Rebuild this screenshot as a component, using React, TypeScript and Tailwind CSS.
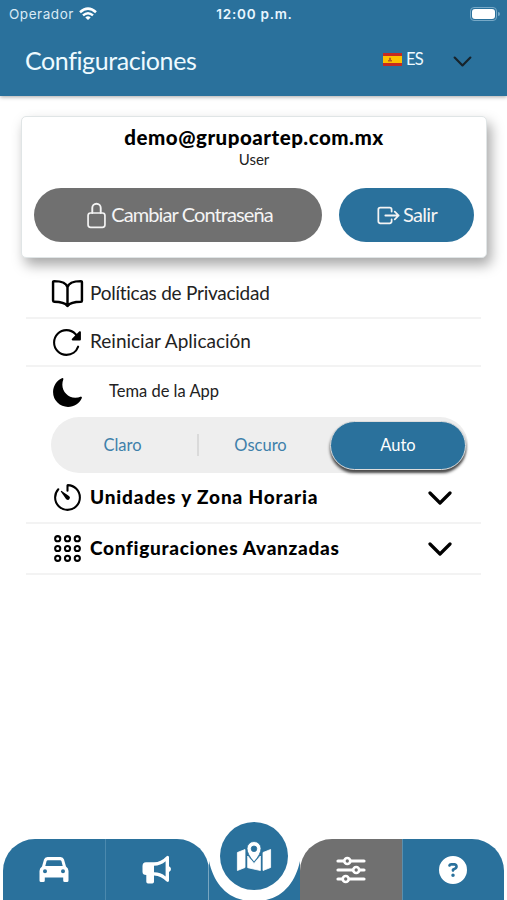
import type { ReactNode } from "react";
import {
  IoAppsOutline,
  IoBookOutline,
  IoExitOutline,
  IoLockClosedOutline,
  IoMoon,
  IoReload,
  IoTimerOutline,
} from "react-icons/io5";
import { FaCircleQuestion } from "react-icons/fa6";

function StatusBar() {
  return (
    <div className="grid h-7 grid-cols-3 items-center pl-[9px] pr-[7px] font-['Inter',sans-serif] text-[13px]">
      <div className="flex items-center gap-[5px] text-[13.5px] tracking-[0.55px] text-[#d8eaf5]">
        Operador
        <svg width="18" height="14" viewBox="0 0 18 14" fill="none" stroke="white" strokeWidth="2.5">
          <path d="M1 5.2Q9-2 17 5.2M4 8.4Q9 4 14 8.4" />
          <path d="M6.3 10.4Q9 8.3 11.7 10.4L9 13Z" fill="white" stroke="none" />
        </svg>
      </div>
      <div className="text-center text-[13.5px] font-semibold tracking-[0.75px] text-[#e8f6ff]">12:00 p.m.</div>
      <div className="flex items-center justify-end gap-px">
        <div className="h-[14px] w-[27px] rounded-[4px] border border-[#77a9c7] p-px">
          <div className="h-full rounded-[3px] bg-white" />
        </div>
        <div className="h-1 w-[2px] rounded-r bg-[#77a9c7]" />
      </div>
    </div>
  );
}

function SpainFlag() {
  return (
    <svg width="19" height="13" viewBox="0 0 19 13">
      <path fill="#c52a20" d="M0 0h19v13H0z" />
      <path fill="#fdc100" d="M0 3h19v7H0z" />
      <path fill="#b65b25" d="M5 7h4v1.5H5zM6 4.8h2V8H6z" />
    </svg>
  );
}

function Chevron({ className, weight }: { className: string; weight: number }) {
  return (
    <svg className={className} viewBox="0 0 24 14" fill="none" stroke="currentColor" strokeWidth={weight} strokeLinecap="round" strokeLinejoin="round">
      <path d="M2 2l10 10L22 2" />
    </svg>
  );
}

function CarIcon() {
  return (
    <svg width="30" height="26" viewBox="0 0 30 26" fill="white">
      <path fillRule="evenodd" d="M8.5 0H21.5Q24.3 0 25 2.5L27 9.5Q29.5 11 29.5 14V23.5Q29.5 25 28 25H25.7Q24.2 25 24.2 23.5V20.5H5.8V23.5Q5.8 25 4.3 25H2Q.5 25 .5 23.5V14Q.5 11 3 9.5L5 2.5Q5.7 0 8.5 0ZM8.8 3.2Q7.9 3.2 7.6 4.1L6.3 9H23.7L22.4 4.1Q22.1 3.2 21.2 3.2ZM6 12.3a2 2 0 1 0 0 4 2 2 0 0 0 0-4ZM24 12.3a2 2 0 1 0 0 4 2 2 0 0 0 0-4Z" />
    </svg>
  );
}

function MegaphoneIcon() {
  return (
    <svg width="30" height="29" viewBox="0 0 30 29" fill="white">
      <path fillRule="evenodd" d="M4 7.2H12Q19 7.2 24.3 1.4Q26.8-.3 27 2.3V11.2Q29 12 29 14.1Q29 16.2 27 17V25.4Q26.7 27.9 24.3 26.2Q19.5 21 12 20.5V26.7Q12 28.4 10.3 28.4H6Q4.3 28.4 4.3 26.7V20Q.5 20 .5 16.8V11Q.5 7.2 4 7.2ZM12 10.7V17.2Q18.7 17.2 23.6 21.4V6.3Q18.7 10.7 12 10.7Z" />
    </svg>
  );
}

function SlidersIcon() {
  return (
    <svg width="30" height="28" viewBox="0 0 30 28" fill="none" stroke="white" strokeWidth="3.2" strokeLinecap="round">
      <path d="M2 5H7.5M15 5H28M2 14H16.5M24 14H28M2 23H6M13.5 23H28" />
      <g strokeWidth="2.7">
        <circle cx="11.3" cy="5" r="3" />
        <circle cx="20.2" cy="14" r="3" />
        <circle cx="9.7" cy="23" r="3" />
      </g>
    </svg>
  );
}

function MapIcon() {
  return (
    <svg width="36" height="32" viewBox="0 0 36 32" fill="white" stroke="white" strokeWidth=".8" strokeLinejoin="round">
      <path d="M1.4 12.5L9 9.5V27.5L1.4 30.5ZM11.7 16V27.7L24.4 30.5V16L18 23.5ZM27 12.5L34.6 9.5V27.5L27 30.5Z" />
      <path fillRule="evenodd" d="M18 1.5a7 7 0 0 0-7 7Q11 14 18 22Q25 14 25 8.5a7 7 0 0 0-7-7ZM18 6a2.8 2.8 0 1 1 0 5.6 2.8 2.8 0 0 1 0-5.6Z" stroke="#2a719c" />
    </svg>
  );
}

function Header() {
  return (
    <header className="h-24 bg-[#2a719c] text-[#eefaff] shadow-[0_1px_4px_rgba(0,0,0,0.35)]">
      <StatusBar />
      <div className="flex h-[66px] items-center pl-[25px] pr-[35px]">
        <h1 className="pb-[2px] text-[25px] leading-none tracking-[-0.41px]">Configuraciones</h1>
        <div className="ml-auto flex items-center pb-[3px] text-[16.5px] leading-none">
          <SpainFlag />
          <span className="ml-1 mr-[30px] inline-block w-[17px] tracking-[-0.8px]">ES</span>
          <Chevron className="mt-[4px] h-[11px] w-[19px] text-[#17232b]" weight={2.8} />
        </div>
      </div>
    </header>
  );
}

function AccountCard() {
  return (
    <section className="ml-[21px] mt-5 h-[142px] w-[466px] rounded-[5px] border border-[#e0e5e6] bg-white px-3 pt-[9px] text-center shadow-[4px_7px_13px_rgba(0,0,0,0.35)]">
      <h2 className="text-[20.5px] font-black leading-[22px] tracking-[0.5px] text-black">demo@grupoartep.com.mx</h2>
      <p className="pt-px text-[15px] leading-[20px] text-[#222]">User</p>
      <div className="mt-[19px] flex gap-[17px] text-[20px] text-[#f4f4f4]">
        <button className="flex h-[54px] w-72 items-center justify-center gap-[1px] rounded-full bg-[#707070]">
          <IoLockClosedOutline className="text-[27px] [&_path]:[stroke-width:36px]" />
          <span className="pb-[2px] tracking-[-0.9px]">Cambiar Contraseña</span>
        </button>
        <button className="flex h-[54px] w-[135px] items-center justify-center gap-[2px] rounded-full bg-[#2a719c]">
          <IoExitOutline className="text-[25px] [&_path]:[stroke-width:36px]" />
          <span className="pb-[2px] tracking-[-0.7px]">Salir</span>
        </button>
      </div>
    </section>
  );
}

function Row({ icon, className, children }: { icon: ReactNode; className: string; children: ReactNode }) {
  return (
    <div className={`flex items-center border-b-2 border-[#f3f3f3] pl-[25px] pr-[29px] ${className}`}>
      <span className="mr-[7px] w-8 text-[33px] text-black">{icon}</span>
      {children}
    </div>
  );
}

function ThemeSwitch() {
  return (
    <div className="ml-[25px] flex h-14 w-[417px] items-center rounded-full bg-[#eee] text-center text-[16.5px] text-[#3e80aa]">
      <div className="w-[146px] pr-[3px]">Claro</div>
      <div className="h-[22px] w-[2px] bg-[#dadada]" />
      <div className="w-[129px] pr-[6px]">Oscuro</div>
      <div className="ml-[2px] h-[49px] w-[136px] rounded-full border border-[#ddd] bg-[#2a719c] leading-[47px] text-white shadow-[0_3px_3px_rgba(0,0,0,0.7)]">
        Auto
      </div>
    </div>
  );
}

function BottomNav() {
  return (
    <nav className="relative mt-auto flex h-[61px] px-[3px] text-white">
      <div className="flex w-[206px] overflow-hidden rounded-t-[32px] bg-[#2a719c]">
        <div className="flex w-[103px] items-center justify-center border-r border-[#4b89ae]"><CarIcon /></div>
        <div className="flex w-[103px] items-center justify-center border-r border-[#78a6c1]"><MegaphoneIcon /></div>
      </div>
      <svg className="h-[61px] w-[91px]" viewBox="0 0 91 61">
        <path fill="#2a719c" d="M0 22C4 41 15 57 34 61H0ZM91 22C87 41 76 57 57 61H91Z" />
      </svg>
      <div className="flex w-[204px] overflow-hidden rounded-t-[32px]">
        <div className="flex w-[102px] items-center justify-center bg-[#707070]"><SlidersIcon /></div>
        <div className="flex w-[102px] items-center justify-center border-l border-[#5a8fae] bg-[#2a719c] pr-[2px]"><FaCircleQuestion className="text-[28px]" /></div>
      </div>
      <button className="absolute left-[220px] top-[-17px] flex h-[68px] w-[68px] items-center justify-center rounded-full bg-[#2a719c]">
        <MapIcon />
      </button>
    </nav>
  );
}

export default function App() {
  return (
    <main className="flex h-[900px] w-[507px] flex-col overflow-hidden bg-white font-['Lato',sans-serif] text-[#222]">
      <Header />
      <AccountCard />
      <section className="ml-[26px] mt-[11px] w-[455px] text-[19px]">
        <Row className="h-[50px]" icon={<IoBookOutline className="[&_path]:[stroke-width:38px]" />}>
          <span className="tracking-[-0.25px]">Políticas de Privacidad</span>
        </Row>
        <Row className="h-12" icon={<IoReload />}>
          <span className="pb-px">Reiniciar Aplicación</span>
        </Row>
        <div className="flex h-[50px] items-center pl-[25px]">
          <IoMoon className="text-[33px] text-black" />
          <span className="ml-[25px] pb-[2px] text-[16.5px]">Tema de la App</span>
        </div>
        <ThemeSwitch />
        <Row className="h-[51px]" icon={<IoTimerOutline />}>
          <b className="font-black tracking-[0.85px] text-black">Unidades y Zona Horaria</b>
          <Chevron className="ml-auto h-[14px] w-6 text-black" weight={3.2} />
        </Row>
        <Row className="h-[51px]" icon={<IoAppsOutline className="[&_circle]:[stroke-width:38px]" />}>
          <b className="font-black tracking-[0.7px] text-black">Configuraciones Avanzadas</b>
          <Chevron className="ml-auto h-[14px] w-6 text-black" weight={3.2} />
        </Row>
      </section>
      <BottomNav />
    </main>
  );
}
